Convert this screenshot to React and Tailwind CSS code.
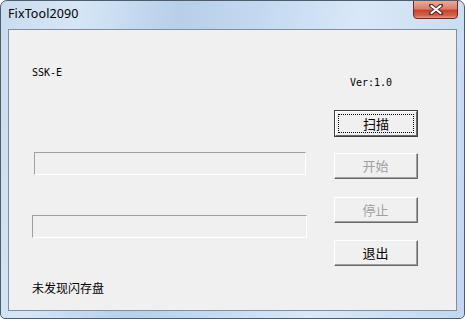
const CloseGlyph = () => (
  <svg width="14" height="11" viewBox="0 0 14 11">
    <path d="M2 1.5l10 8M12 1.5l-10 8" stroke="#4a2a25" strokeWidth={4} strokeLinecap="round" />
    <path d="M2.5 2l9 7M11.5 2l-9 7" stroke="#ffffff" strokeWidth={2.2} strokeLinecap="round" />
  </svg>
);

function ClassicButton({ label, disabled, isDefault, className = "" }) {
  if (isDefault) {
    return (
      <div className={"w-[84px] h-[27px] border border-[#404040] bg-[#f0f0f0] " + className}>
        <div className="h-full border-t border-l border-white border-r border-b border-r-[#696969] border-b-[#696969] p-[2px]">
          <div className="h-full border border-dotted border-black flex items-center justify-center text-[13px] text-black">
            {label}
          </div>
        </div>
      </div>
    );
  }
  return (
    <div className={"w-[84px] h-[26px] border-t border-l border-white border-r border-b border-r-[#696969] border-b-[#696969] bg-[#f0f0f0] " + className}>
      <div className="h-full border-r border-b border-r-[#a0a0a0] border-b-[#a0a0a0] flex items-center justify-center">
        <span className={disabled ? "text-[13px] text-[#a0a0a0]" : "text-[13px] text-black"}>{label}</span>
      </div>
    </div>
  );
}

function SunkenBox({ className }) {
  return (
    <div className={"h-[23px] border-t border-l border-[#a0a0a0] border-r border-b border-r-white border-b-white " + className} />
  );
}

export default function App() {
  return (
    <div
      className="w-[465px] h-[319px] rounded-t-[7px] rounded-b-[5px] border border-[#4e5d6e] bg-[linear-gradient(100deg,#c9dbef_0%,#d6e6f7_15%,#b7cfe9_35%,#c8dcf2_55%,#d9e8f8_70%,#c2d7ee_100%)] flex flex-col overflow-hidden"
      style={{ fontFamily: '"Noto Sans", "Noto Sans CJK SC", sans-serif' }}
    >
      <div className="h-[28px] flex items-start justify-between shrink-0">
        <span className="pl-[7px] pt-[6px] text-[12.5px] leading-[14px] text-black tracking-[0.1px]">FixTool2090</span>
        <div className="mr-[6px] w-[45px] h-[19px] -mt-px rounded-b-[4px] border border-[#6b2a20] bg-[linear-gradient(180deg,#e9ab9b_0%,#d9806d_45%,#c7422b_55%,#d4614a_85%,#e89a82_100%)] flex items-center justify-center">
          <CloseGlyph />
        </div>
      </div>
      <div className="mx-[7px] mb-[7px] flex-1 border border-[#7e8fa3] bg-[#f0f0f0] flex text-[12px] text-black">
        <div className="flex flex-col pl-[23px] w-[325px] shrink-0">
          <div
            className="mt-[36px] h-[14px] leading-[14px] text-[10px]"
            style={{ fontFamily: '"DejaVu Sans Mono", monospace' }}
          >
            SSK-E
          </div>
          <SunkenBox className="mt-[72px] ml-[2px] w-[272px]" />
          <SunkenBox className="mt-[40px] w-[275px]" />
          <div
            className="mt-[42px] h-[16px] leading-[16px] text-[12px]"
            style={{ fontFamily: '"Noto Sans CJK SC", sans-serif' }}
          >
            未发现闪存盘
          </div>
        </div>
        <div
          className="flex flex-col"
          style={{ fontFamily: '"Noto Sans CJK SC", sans-serif' }}
        >
          <div
            className="mt-[46px] ml-[16px] h-[14px] leading-[14px] text-[10px]"
            style={{ fontFamily: '"DejaVu Sans Mono", monospace' }}
          >
            Ver:1.0
          </div>
          <ClassicButton label="扫描" isDefault className="mt-[20px]" />
          <ClassicButton label="开始" disabled className="mt-[16px]" />
          <ClassicButton label="停止" disabled className="mt-[18px]" />
          <ClassicButton label="退出" className="mt-[17px]" />
        </div>
      </div>
    </div>
  );
}
